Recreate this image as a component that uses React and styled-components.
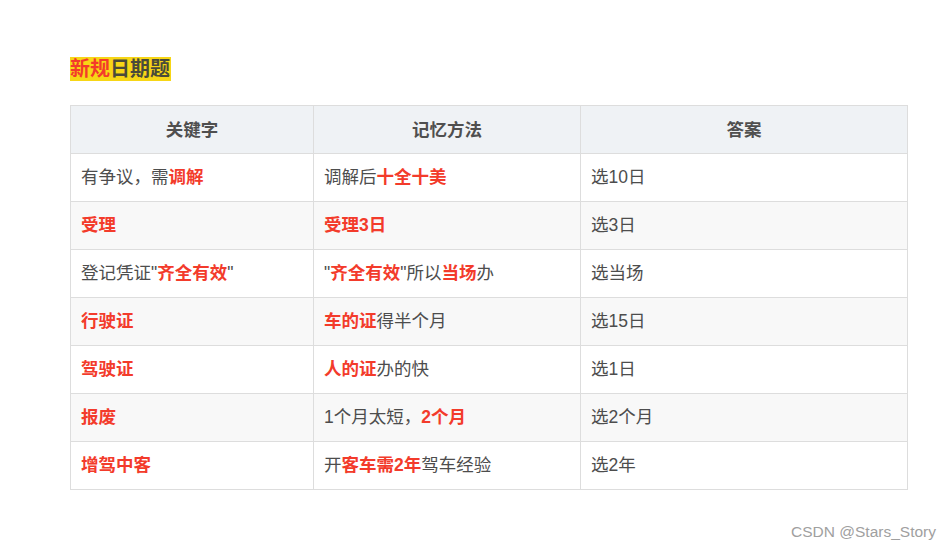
import React from 'react';
import styled, { createGlobalStyle } from 'styled-components';

const GlobalStyle = createGlobalStyle`
  html, body {
    margin: 0;
    padding: 0;
    background: #fff;
  }
  body {
    font-family: "Liberation Sans", "Noto Sans CJK SC", sans-serif;
    width: 952px;
    height: 551px;
    overflow: hidden;
  }
`;

const Page = styled.div`
  position: relative;
  width: 952px;
  height: 551px;
  padding: 57px 0 0 70px;
  box-sizing: border-box;
`;

const Title = styled.h3`
  margin: 0 0 24px;
  font-size: 20px;
  line-height: 24px;
  font-weight: bold;
  display: inline-block;
  background: #f7d616;
  color: #4a4a3a;
  padding: 0 1px 0 0;
`;

const Red = styled.span`
  color: #f33b2b;
  font-weight: bold;
`;

const Table = styled.table`
  border-collapse: collapse;
  table-layout: fixed;
  width: 837px;
  font-size: 17.5px;
  color: #4d4d4d;
`;

const Th = styled.th`
  height: 48px;
  padding: 0 10px 3px;
  background: #eff2f5;
  border: 1px solid #dddddd;
  font-weight: bold;
  text-align: center;
  color: #4f4f4f;
  box-sizing: border-box;
`;

const Row = styled.tr`
  background: ${p => (p.$alt ? '#f8f8f8' : '#ffffff')};
`;

const Td = styled.td`
  height: 48px;
  padding: 0 10px 4px;
  border: 1px solid #dddddd;
  box-sizing: border-box;
  white-space: nowrap;
`;

const Watermark = styled.div`
  position: absolute;
  right: 16px;
  bottom: 10px;
  font-size: 15.5px;
  color: #a0a0a0;
  font-family: "Liberation Sans", sans-serif;
`;

const rows = [
  [<>有争议，需<Red>调解</Red></>, <>调解后<Red>十全十美</Red></>, '选10日'],
  [<Red>受理</Red>, <Red>受理3日</Red>, '选3日'],
  [<>登记凭证"<Red>齐全有效</Red>"</>, <>"<Red>齐全有效</Red>"所以<Red>当场</Red>办</>, '选当场'],
  [<Red>行驶证</Red>, <><Red>车的证</Red>得半个月</>, '选15日'],
  [<Red>驾驶证</Red>, <><Red>人的证</Red>办的快</>, '选1日'],
  [<Red>报废</Red>, <>1个月太短，<Red>2个月</Red></>, '选2个月'],
  [<Red>增驾中客</Red>, <>开<Red>客车需2年</Red>驾车经验</>, '选2年'],
];

export default function App() {
  return (
    <>
      <GlobalStyle />
      <Page>
        <Title>
          <Red>新规</Red>日期题
        </Title>
        <Table>
          <colgroup>
            <col style={{ width: 243 }} />
            <col style={{ width: 267 }} />
            <col style={{ width: 327 }} />
          </colgroup>
          <thead>
            <tr>
              <Th>关键字</Th>
              <Th>记忆方法</Th>
              <Th>答案</Th>
            </tr>
          </thead>
          <tbody>
            {rows.map((r, i) => (
              <Row key={i} $alt={i % 2 === 1}>
                <Td>{r[0]}</Td>
                <Td>{r[1]}</Td>
                <Td>{r[2]}</Td>
              </Row>
            ))}
          </tbody>
        </Table>
        <Watermark>CSDN @Stars_Story</Watermark>
      </Page>
    </>
  );
}
